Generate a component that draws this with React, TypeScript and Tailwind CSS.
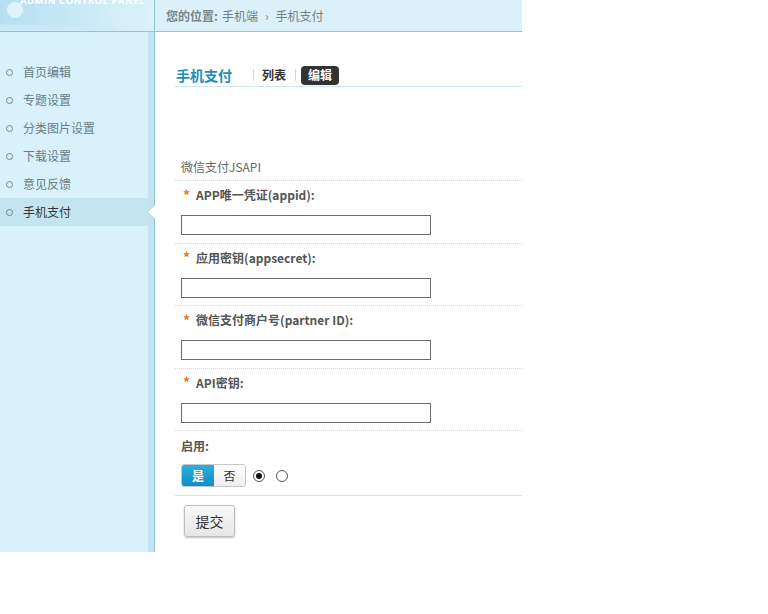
import React from "react";

const font = { fontFamily: '"Noto Sans CJK SC", "Noto Sans", sans-serif' };

const menu = ["首页编辑", "专题设置", "分类图片设置", "下载设置", "意见反馈", "手机支付"];

const fields = [
  "APP唯一凭证(appid):",
  "应用密钥(appsecret):",
  "微信支付商户号(partner ID):",
  "API密钥:",
];

function Header() {
  return (
    <div className="flex h-[32px] border-b border-[#8ec6d6]">
      <div className="relative w-[155px] overflow-hidden border-r border-[#8ec6d6] bg-gradient-to-r from-[#b5dff0] via-[#c8e9f6] to-[#dcf1fa]">
        <svg className="absolute left-0 top-0" width="148" height="31" viewBox="0 0 148 31">
          <path d="M0 24 C 40 26, 90 22, 112 31 L 0 31 Z" fill="#cdebf7" opacity="0.8" />
          <path d="M100 0 C 108 10, 112 20, 118 31 L 148 31 L 148 0 Z" fill="#d6eff9" opacity="0.7" />
          <circle cx="15" cy="10" r="8" fill="#e6f6fc" opacity="0.85" />
        </svg>
        <div className="absolute left-[20px] top-[-6px] text-[9.5px] font-bold tracking-[0.5px] text-white" style={{ fontFamily: '"Open Sans", "Liberation Sans", sans-serif' }}>
          ADMIN CONTROL PANEL
        </div>
      </div>
      <div className="flex flex-1 items-center bg-[#dcf0f9] pl-[11px] text-[12px] text-[#6f7f87]">
        <span className="font-bold text-[#7a868c]">您的位置:</span>
        <span className="ml-[4px]">手机端</span>
        <span className="mx-[7px] text-[12px]">›</span>
        <span>手机支付</span>
      </div>
    </div>
  );
}

function Sidebar() {
  return (
    <div className="flex h-[520px] w-[155px] border-r border-[#8ec6d6] bg-[#d8f1fb]">
      <div className="w-[148px] pt-[26px]">
        {menu.map((m, i) => {
          const active = i === menu.length - 1;
          return (
            <div
              key={m}
              className={`relative flex h-[28px] items-center text-[12px] ${active ? "bg-[#c3e5ef] text-[#333]" : "text-[#6b7d86]"}`}
            >
              <span className="ml-[6px] mr-[10px] h-[7px] w-[7px] rounded-full border border-[#6f8790]" />
              {m}
              {active && (
                <svg className="absolute right-[-7px] top-[7px]" width="8" height="14" viewBox="0 0 8 14">
                  <path d="M8 0 L0 7 L8 14 Z" fill="#ffffff" />
                  <path d="M8 0 L0 7 L8 14" fill="none" stroke="#a9d6e3" strokeWidth="1" />
                </svg>
              )}
            </div>
          );
        })}
      </div>
      <div className="flex-1 bg-[#c3e4ee]" />
    </div>
  );
}

function Field({ label }: { label: string }) {
  return (
    <div className="border-b border-dotted border-[#c9dde3] px-[6px] pb-[7.5px] pt-[5px]">
      <div className="flex h-[18px] items-center text-[12px] font-bold text-[#555]">
        <span className="mr-[6px] ml-[2px] text-[14px] font-bold text-[#e07a1c]">*</span>
        {label}
      </div>
      <input className="mt-[11px] block h-[20px] w-[250px] border border-[#6b6b6b] bg-white outline-none" />
    </div>
  );
}

function Main() {
  return (
    <div className="flex-1 pl-[20px]">
      <div className="mt-[32px] flex h-[23px] items-center border-b border-[#cfe6ee]">
        <span className="ml-[1px] text-[14px] font-bold text-[#1e8db7]">手机支付</span>
        <span className="ml-[21px] h-[12px] w-px bg-[#d8d8d8]" />
        <span className="ml-[8px] text-[12px] font-bold text-[#333]">列表</span>
        <span className="ml-[9px] h-[12px] w-px bg-[#d8d8d8]" />
        <span className="ml-[5px] flex h-[19px] items-center rounded-[4px] bg-[#333] px-[7px] text-[12px] font-bold text-white">编辑</span>
      </div>
      <div className="mt-[67px]">
        <div className="flex h-[27px] items-center border-b border-dotted border-[#c9dde3] px-[6px] text-[12px] text-[#666]">
          微信支付JSAPI
        </div>
        {fields.map((f) => (
          <Field key={f} label={f} />
        ))}
        <div className="border-b border-[#d3e6ec] px-[6px] pb-[8px] pt-[6px]">
          <div className="flex h-[18px] items-center text-[12px] font-bold text-[#555]">启用:</div>
          <div className="mt-[9px] flex items-center">
            <div className="flex h-[23px] w-[65px] overflow-hidden rounded-[3px] border border-[#c7c7c7] text-[12px]">
              <span className="flex w-[32px] items-center justify-center bg-gradient-to-b from-[#2ab0e0] to-[#0f8fc6] font-bold text-white">是</span>
              <span className="flex flex-1 items-center justify-center bg-gradient-to-b from-white to-[#eeeeee] text-[#333]">否</span>
            </div>
            <span className="ml-[7px] flex h-[12px] w-[12px] items-center justify-center rounded-full border border-[#555] bg-white">
              <span className="h-[6px] w-[6px] rounded-full bg-[#111]" />
            </span>
            <span className="ml-[11px] h-[12px] w-[12px] rounded-full border border-[#555] bg-white" />
          </div>
        </div>
        <div className="px-[9px] pt-[9px]">
          <button className="h-[32px] w-[51px] rounded-[3px] border border-[#bdbdbd] bg-gradient-to-b from-[#fafafa] to-[#e6e6e6] text-[14px] text-[#333] shadow-[0_1px_2px_rgba(0,0,0,0.25)]">
            提交
          </button>
        </div>
      </div>
    </div>
  );
}

export default function App() {
  return (
    <div className="h-[614px] w-[768px] bg-white" style={font}>
      <div className="w-[522px]">
        <Header />
        <div className="flex">
          <Sidebar />
          <Main />
        </div>
      </div>
    </div>
  );
}
